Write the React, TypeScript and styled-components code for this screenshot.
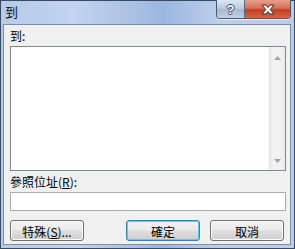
import styled, { createGlobalStyle } from 'styled-components';

const GlobalStyle = createGlobalStyle`
  html, body {
    margin: 0;
    padding: 0;
    background: #ffffff;
  }
  body {
    font-family: "Noto Sans CJK TC", "Liberation Sans", sans-serif;
    font-size: 12px;
    color: #000;
  }
`;

const Window = styled.div`
  box-sizing: border-box;
  width: 295px;
  height: 249px;
  border: 1px solid #3b4a63;
  background: linear-gradient(90deg, #b6cbe8 0%, #c2d4ee 25%, #a6bee2 48%, #9cb6de 55%, #bcd0ec 75%, #b9cdea 100%);
  display: flex;
  flex-direction: column;
`;

const TitleBar = styled.div`
  height: 23px;
  display: flex;
  align-items: flex-start;
  flex-shrink: 0;
`;

const Title = styled.span`
  padding: 3px 0 0 4px;
  line-height: 15px;
  font-size: 13px;
  color: #111;
`;

const CaptionButtons = styled.div`
  margin: -1px 3px 0 auto;
  display: flex;
  border: 1px solid #4c5b75;
  border-top: none;
  border-radius: 0 0 4px 4px;
  overflow: hidden;
  box-shadow: 0 1px 0 rgba(255, 255, 255, 0.6);
`;

const CaptionButton = styled.div<{ $close?: boolean }>`
  width: ${({ $close }) => ($close ? 45 : 27)}px;
  height: 18px;
  display: flex;
  align-items: center;
  justify-content: center;
  border-left: ${({ $close }) => ($close ? '1px solid #5a6780' : 'none')};
  background: ${({ $close }) =>
    $close
      ? 'linear-gradient(180deg, #e8a08c 0%, #d86e56 45%, #c43d22 55%, #d2654a 100%)'
      : 'linear-gradient(180deg, #dde6f2 0%, #bccbe0 45%, #a8b9d1 55%, #c2d0e2 100%)'};
`;

const Client = styled.div`
  flex: 1;
  margin: 0 3px 3px 2px;
  border: 1px solid #7d8da8;
  background: #f0f0f0;
  padding: 3px 4px 0 6px;
  display: flex;
  flex-direction: column;
`;

const Label = styled.div<{ $gap?: number }>`
  line-height: 15px;
  height: 15px;
  margin-top: ${({ $gap }) => $gap ?? 0}px;
  margin-bottom: 3px;
  white-space: nowrap;

  u {
    text-decoration: underline;
  }
`;

const ListBox = styled.div`
  box-sizing: border-box;
  height: 125px;
  border: 1px solid #828790;
  background: #fff;
  display: flex;
  justify-content: flex-end;
`;

const ScrollBar = styled.div`
  width: 16px;
  background: linear-gradient(90deg, #e6e6e6 0%, #f2f2f2 30%, #f2f2f2 70%, #e9e9e9 100%);
  border-left: 1px solid #f7f7f7;
  display: flex;
  flex-direction: column;
  justify-content: space-between;
  align-items: center;
  padding: 9px 0 7px;
`;

const Arrow = styled.svg<{ $down?: boolean }>`
  width: 7px;
  height: 4px;
  transform: ${({ $down }) => ($down ? 'rotate(180deg)' : 'none')};
`;

const TextBox = styled.div`
  box-sizing: border-box;
  height: 19px;
  border: 1px solid #abadb3;
  background: #fff;
`;

const ButtonRow = styled.div`
  display: flex;
  justify-content: space-between;
  margin-top: 9px;
  padding-right: 2px;
`;

const ButtonGroup = styled.div`
  display: flex;
  gap: 10px;
`;

const Button = styled.div<{ $primary?: boolean }>`
  box-sizing: border-box;
  width: 74px;
  height: 21px;
  border: 1px solid ${({ $primary }) => ($primary ? '#3c7fb1' : '#707070')};
  border-radius: 3px;
  background: linear-gradient(180deg, #f2f2f2 0%, #ebebeb 48%, #dddddd 52%, #cfcfcf 100%);
  box-shadow: inset 0 0 0 1px ${({ $primary }) => ($primary ? '#48d5f8' : '#fbfbfb')};
  display: flex;
  align-items: center;
  justify-content: center;
  line-height: 15px;
  padding-top: 1px;

  u {
    text-decoration: underline;
  }
`;

const CloseGlyph = () => (
  <svg width="14" height="11" viewBox="0 0 14 11">
    <path
      d="M1 1h4l2 2.5L9 1h4L9.2 5.5 13 10H9L7 7.5 5 10H1l3.8-4.5z"
      fill="#fff"
      stroke="#3a2a2a"
      strokeWidth="1"
      strokeLinejoin="round"
    />
  </svg>
);

const HelpGlyph = styled.span`
  font-family: "Liberation Sans", sans-serif;
  font-weight: bold;
  font-size: 13px;
  line-height: 13px;
  color: #fff;
  text-shadow: 1px 0 0 #3d4a60, -1px 0 0 #3d4a60, 0 1px 0 #3d4a60, 0 -1px 0 #3d4a60;
`;

const TriangleUp = ({ down }: { down?: boolean }) => (
  <Arrow $down={down} viewBox="0 0 7 4">
    <path d="M3.5 0L7 4H0z" fill="#a3a3a3" />
  </Arrow>
);

export default function App() {
  return (
    <>
      <GlobalStyle />
      <Window>
        <TitleBar>
          <Title>到</Title>
          <CaptionButtons>
            <CaptionButton>
              <HelpGlyph>?</HelpGlyph>
            </CaptionButton>
            <CaptionButton $close>
              <CloseGlyph />
            </CaptionButton>
          </CaptionButtons>
        </TitleBar>
        <Client>
          <Label>到:</Label>
          <ListBox>
            <ScrollBar>
              <TriangleUp />
              <TriangleUp down />
            </ScrollBar>
          </ListBox>
          <Label $gap={3}>
            參照位址(<u>R</u>):
          </Label>
          <TextBox />
          <ButtonRow>
            <Button>
              特殊(<u>S</u>)...
            </Button>
            <ButtonGroup>
              <Button $primary>確定</Button>
              <Button>取消</Button>
            </ButtonGroup>
          </ButtonRow>
        </Client>
      </Window>
    </>
  );
}
